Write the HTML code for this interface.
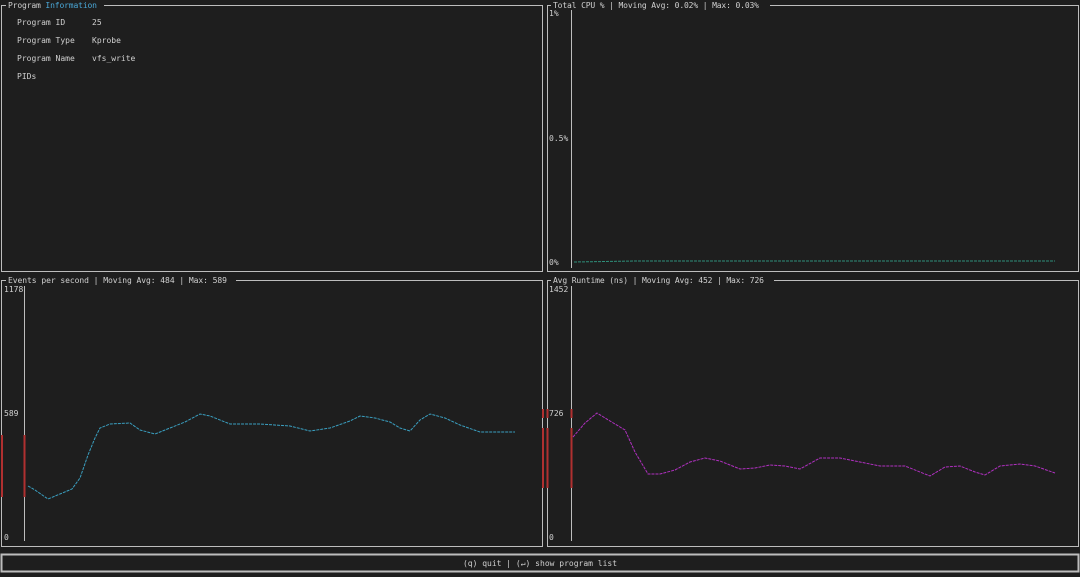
<!DOCTYPE html><html><head><style>
body{margin:0;background:#1e1e1e;width:1080px;height:573px;overflow:hidden;font-family:"DejaVu Sans Mono","Liberation Mono",monospace;}
svg text{font-family:"DejaVu Sans Mono","Liberation Mono",monospace;font-size:8px;fill:#d0d0d0}
</style></head><body>
<svg width="1080" height="573" xmlns="http://www.w3.org/2000/svg">
<rect width="1080" height="573" fill="#1e1e1e"/>
<g fill="none" stroke="#bdbdbd" stroke-width="1">
<rect x="1.5" y="5.5" width="541" height="266"/>
<rect x="547.5" y="5.5" width="531" height="266"/>
<rect x="1.5" y="280.5" width="541" height="266"/>
<rect x="547.5" y="280.5" width="531" height="266"/>
<rect x="1.5" y="554.5" width="1077" height="17" stroke-width="2"/>
<line x1="24.5" y1="286" x2="24.5" y2="541"/>
<line x1="571.5" y1="286" x2="571.5" y2="541"/>
<line x1="571.5" y1="10" x2="571.5" y2="268"/>
</g>
<rect x="0" y="0" width="1080" height="4" fill="#1e1e1e"/>
<g fill="#1e1e1e">
<rect x="6" y="1" width="98" height="9"/><rect x="551" y="1" width="219" height="9"/>
<rect x="6" y="276" width="230" height="9"/><rect x="551" y="276" width="223" height="9"/>
</g>
<text x="8" y="8" textLength="89">Program <tspan fill="#4aa8d8">Information</tspan></text>
<text x="553" y="8" textLength="206">Total CPU % | Moving Avg: 0.02% | Max: 0.03%</text>
<text x="8" y="283" textLength="219">Events per second | Moving Avg: 484 | Max: 589</text>
<text x="553" y="283" textLength="211">Avg Runtime (ns) | Moving Avg: 452 | Max: 726</text>
<text x="17" y="25">Program ID</text><text x="92" y="25">25</text>
<text x="17" y="43">Program Type</text><text x="92" y="43">Kprobe</text>
<text x="17" y="61">Program Name</text><text x="92" y="61">vfs_write</text>
<text x="17" y="79">PIDs</text>
<text x="549" y="16">1%</text><text x="549" y="141">0.5%</text><text x="549" y="265">0%</text>
<text x="4" y="292">1178</text><text x="4" y="416">589</text><text x="4" y="540">0</text>
<text x="549" y="292">1452</text><text x="549" y="416" fill="#e04040">726</text><text x="549" y="540">0</text>
<text x="540" y="566" text-anchor="middle">(q) quit | (↵) show program list</text>
<g stroke="#b03030" stroke-width="2">
<line x1="2" y1="435" x2="2" y2="497"/><line x1="24.5" y1="435" x2="24.5" y2="497"/>
<line x1="543" y1="428" x2="543" y2="488"/><line x1="547.5" y1="428" x2="547.5" y2="488"/><line x1="571.5" y1="428" x2="571.5" y2="488"/>
<line x1="543" y1="409" x2="543" y2="418"/><line x1="547.5" y1="409" x2="547.5" y2="418"/><line x1="571.5" y1="409" x2="571.5" y2="418"/>
</g>
<polyline fill="none" stroke="#2f8f7a" stroke-width="1" stroke-dasharray="3,1" points="574,262 636,261 1055,261"/>
<polyline fill="none" stroke="#3a9fc0" stroke-width="1" stroke-dasharray="3,1" points="28,486 35,490 48,499 60,494 72,489 80,478 88,455 95,438 100,428 110,424 130,423 140,430 155,434 170,428 185,422 200,414 210,416 230,424 260,424 290,426 310,431 330,428 350,421 360,416 375,418 390,422 400,428 410,431 420,420 430,414 445,418 460,425 480,432 500,432 515,432"/>
<polyline fill="none" stroke="#b030c0" stroke-width="1" stroke-dasharray="3,1" points="573,437 585,423 597,413 610,421 625,430 635,452 648,474 660,474 675,470 690,462 705,458 720,461 740,469 755,468 770,465 785,466 800,469 820,458 840,458 860,462 880,466 905,466 930,476 945,467 960,466 975,472 985,475 1000,466 1020,464 1035,466 1055,473"/>
</svg>
</body></html>
